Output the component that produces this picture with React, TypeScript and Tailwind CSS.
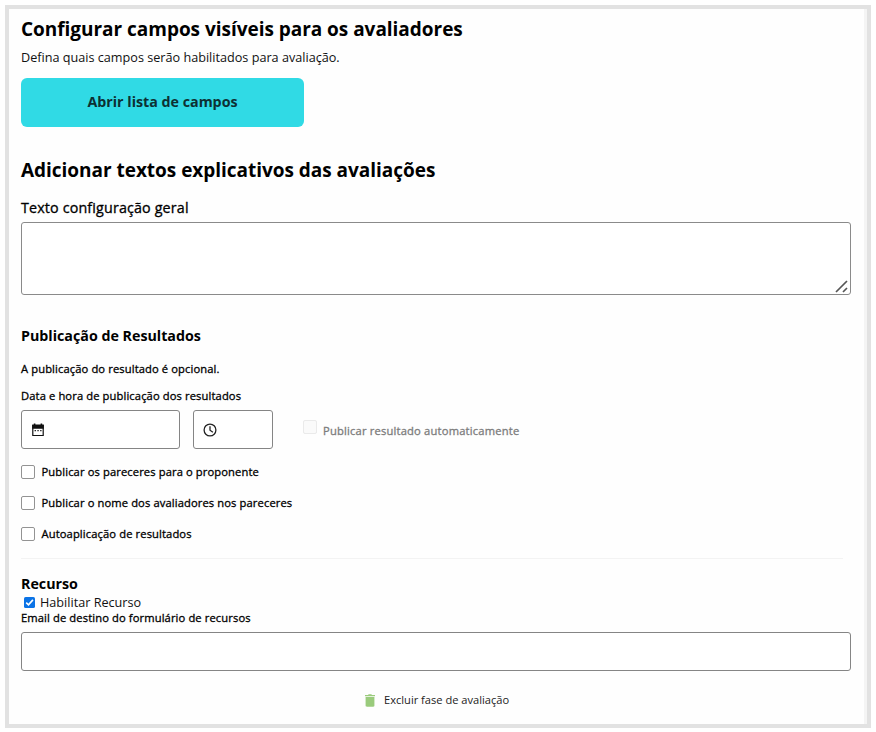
import React from "react";

function Option({ label, className }: { label: string; className: string }) {
  return (
    <label className={`flex h-[14px] items-center text-[11.2px] tracking-[0.11px] [-webkit-text-stroke:0.3px_currentColor] ${className}`}>
      <span className="mr-[6.5px] h-[14px] w-[14px] shrink-0 rounded-[2px] border border-[#939393] bg-white" />
      <span className="leading-4">{label}</span>
    </label>
  );
}

export default function App() {
  return (
    <div className="h-[732px] w-[876px] bg-white pl-[5px] pt-[5px] font-['Open_Sans','Noto_Sans',sans-serif] text-black">
      <div className="flex h-[723px] w-[866px] border-4 border-[#e2e2e2] bg-[#fefefe]">
        <main className="flex min-w-0 flex-1 flex-col whitespace-nowrap pl-3">
          <h1 className="mt-2 h-6 text-[19px] font-bold leading-6 tracking-[-0.03px]">
            Configurar campos visíveis para os avaliadores
          </h1>
          <p className="mt-2 h-4 text-[12.65px] leading-4 text-[#111]">
            Defina quais campos serão habilitados para avaliação.
          </p>
          <button className="mt-[13px] h-[49px] w-[283px] rounded-[6px] bg-[#30dae5] pb-[2px] text-[14.25px] font-bold text-[#0d3033]">
            Abrir lista de campos
          </button>

          <h2 className="mt-8 h-6 text-[19px] font-bold leading-[23px] tracking-[-0.03px]">
            Adicionar textos explicativos das avaliações
          </h2>
          <div className="mt-[15px] h-5 text-[14.3px] leading-5 tracking-[0.15px] [-webkit-text-stroke:0.3px_currentColor]">
            Texto configuração geral
          </div>
          <div className="mt-1 flex h-[73px] w-[830px] items-end justify-end rounded-[3px] border border-[#8a8a8a] bg-white">
            <svg width="15" height="14" viewBox="0 0 15 14" fill="none" stroke="#555" strokeWidth="1.7">
              <path d="M1 12 12 1M8 12l4-4" />
            </svg>
          </div>

          <h3 className="mt-[31px] h-5 text-[14.25px] font-bold leading-5">
            Publicação de Resultados
          </h3>
          <p className="mt-[15px] h-4 text-[11.2px] leading-4 tracking-[0.11px] [-webkit-text-stroke:0.3px_currentColor]">
            A publicação do resultado é opcional.
          </p>
          <div className="mt-[11px] h-4 text-[11.2px] leading-4 tracking-[0.11px] [-webkit-text-stroke:0.3px_currentColor]">
            Data e hora de publicação dos resultados
          </div>
          <div className="mt-[6px] flex h-[39px]">
            <div className="flex h-[39px] w-[159px] items-center rounded-[3px] border border-[#858585] bg-white pl-[9px]">
              <svg width="14" height="14" viewBox="0 0 14 14" fill="none">
                <path d="M1.8 2.2h10.4v10.3H1.8z" stroke="#111" strokeWidth="1.2" />
                <path d="M1.2 2h11.6v3.8H1.2zM2.8.6h1.6V3H2.8zM9.6.6h1.6V3H9.6z" fill="#111" />
                <path d="M3.6 7.6h1.3M6.4 7.6h1.3M9.2 7.6h1.3" stroke="#111" strokeWidth="1.1" />
              </svg>
            </div>
            <div className="ml-[13px] flex h-[39px] w-20 items-center rounded-[3px] border border-[#858585] bg-white pl-[9px]">
              <svg width="14" height="14" viewBox="0 0 14 14" fill="none" stroke="#222" strokeWidth="1.3">
                <circle cx="7" cy="7" r="5.9" />
                <path d="M7 3.2v4l2.9 2" />
              </svg>
            </div>
            <span className="ml-[30px] mt-[10px] h-[14px] w-[14px] rounded-[2px] border border-[#eaeaea] bg-[#fafafa]" />
            <span className="ml-[6px] mt-[13px] text-[11.2px] leading-4 tracking-[0.18px] text-[#7c7c7c] [-webkit-text-stroke:0.3px_currentColor]">
              Publicar resultado automaticamente
            </span>
          </div>

          <Option className="mt-4" label="Publicar os pareceres para o proponente" />
          <Option className="mt-[17px]" label="Publicar o nome dos avaliadores nos pareceres" />
          <Option className="mt-[17px]" label="Autoaplicação de resultados" />

          <div className="mt-[17px] h-px w-[822px] bg-[#f3f3f3]" />

          <h3 className="mt-[15px] h-5 text-[14.25px] font-bold leading-5">
            Recurso
          </h3>
          <label className="mt-[1px] flex h-[15px] items-start pl-[3px] text-[12.65px] leading-[14px] text-[#111]">
            <svg className="mr-[5px] mt-[2px]" width="11" height="11" viewBox="0 0 11 11" fill="none">
              <rect width="11" height="11" rx="1.6" fill="#0b73e6" />
              <path d="m2.2 5.7 2.3 2.2 4.4-5" stroke="#fff" strokeWidth="1.6" />
            </svg>
            <span>Habilitar Recurso</span>
          </label>
          <div className="h-4 text-[11.2px] leading-4 tracking-[0.11px] [-webkit-text-stroke:0.3px_currentColor]">
            Email de destino do formulário de recursos
          </div>
          <div className="mt-[6px] h-[39px] w-[830px] rounded-[3px] border border-[#858585] bg-white" />

          <div className="mt-[21px] flex h-4 items-center pl-[344px] text-[11.1px] leading-4 text-[#222]">
            <svg className="mr-[9px]" width="10" height="13" viewBox="0 0 10 13" fill="#9acb7c">
              <path d="M0 1h3l.7-.8h2.6L7 1h3v1.3H0zM.6 3h8.8v8.6c0 .8-.5 1.2-1.2 1.2H1.8c-.7 0-1.2-.4-1.2-1.2z" />
            </svg>
            <span>Excluir fase de avaliação</span>
          </div>
        </main>
        <div className="w-[3px] bg-[#f4f4f4]" />
      </div>
    </div>
  );
}
